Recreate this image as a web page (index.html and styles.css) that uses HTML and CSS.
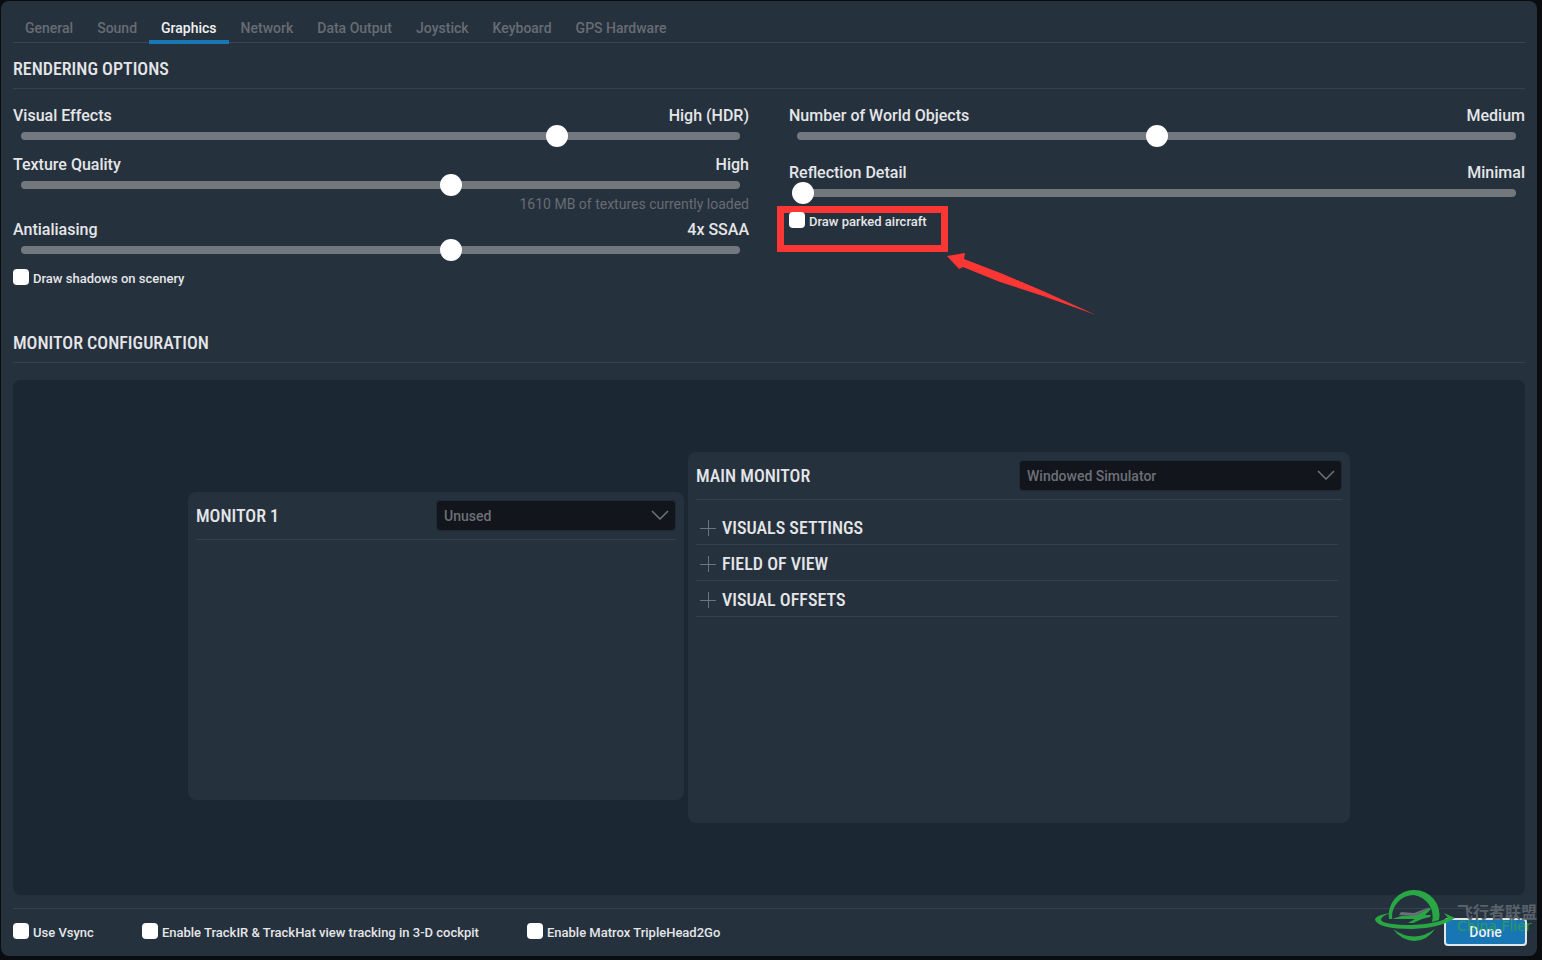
FILE: index.html
```html
<!DOCTYPE html>
<html lang="en">
    <head>
        <meta charset="UTF-8" />
        <meta name="viewport" content="width=device-width, initial-scale=1.0" />
        <title>Settings - Graphics</title>
        <link rel="stylesheet" href="styles.css">
    </head>
    <body>
        <div class="window">
            <nav class="tabs">
                <a href="#general">General</a>
                <a href="#sound">Sound</a>
                <a href="#graphics" class="active">Graphics</a>
                <a href="#network">Network</a>
                <a href="#data">Data Output</a>
                <a href="#joystick">Joystick</a>
                <a href="#keyboard">Keyboard</a>
                <a href="#gps">GPS Hardware</a>
            </nav>

            <h2 class="title">RENDERING OPTIONS</h2>
            <div class="options">
                <div class="column">
                    <div class="setting">
                        <div class="caption"><label for="effects">Visual Effects</label><output for="effects">High (HDR)</output></div>
                        <div class="track"><input id="effects" type="range" value="75" /></div>
                    </div>
                    <div class="setting noted">
                        <div class="caption"><label for="texture">Texture Quality</label><output for="texture">High</output></div>
                        <div class="track"><input id="texture" type="range" value="60" /></div>
                        <p class="note">1610 MB of textures currently loaded</p>
                    </div>
                    <div class="setting">
                        <div class="caption"><label for="aa">Antialiasing</label><output for="aa">4x SSAA</output></div>
                        <div class="track"><input id="aa" type="range" value="60" /></div>
                    </div>
                    <label class="check"><input type="checkbox" /><span>Draw shadows on scenery</span></label>
                </div>
                <div class="column">
                    <div class="setting spaced">
                        <div class="caption"><label for="objects">Number of World Objects</label><output for="objects">Medium</output></div>
                        <div class="track"><input id="objects" type="range" value="50" /></div>
                    </div>
                    <div class="setting">
                        <div class="caption"><label for="reflection">Reflection Detail</label><output for="reflection">Minimal</output></div>
                        <div class="track"><input id="reflection" type="range" value="0" /></div>
                    </div>
                    <div class="marked">
                        <label class="check"><input type="checkbox" /><span>Draw parked aircraft</span></label>
                        <div class="mark"></div>
                        <svg class="arrow" width="150" height="64" viewBox="0 0 150 64">
                            <path d="M0 4 18 1 17 7 56 22 96 39 149 63 96 44 53 30 16 15 12 17Z" fill="#fb3736" />
                        </svg>
                    </div>
                </div>
            </div>

            <h2 class="title">MONITOR CONFIGURATION</h2>
            <div class="canvas">
                <section class="monitor side">
                    <header>
                        <h3>MONITOR 1</h3>
                        <div class="picker">
                            <select aria-label="Monitor 1 usage"><option>Unused</option></select>
                            <svg width="18" height="10" viewBox="0 0 18 10"><path d="M1 1 9 9 17 1" /></svg>
                        </div>
                    </header>
                </section>
                <section class="monitor main">
                    <header>
                        <h3>MAIN MONITOR</h3>
                        <div class="picker">
                            <select aria-label="Main monitor usage"><option>Windowed Simulator</option></select>
                            <svg width="18" height="10" viewBox="0 0 18 10"><path d="M1 1 9 9 17 1" /></svg>
                        </div>
                    </header>
                    <div class="groups">
                        <button type="button"><svg width="16" height="16" viewBox="0 0 16 16"><path d="M0 8.5H16M8.5 0V16" /></svg>VISUALS SETTINGS</button>
                        <button type="button"><svg width="16" height="16" viewBox="0 0 16 16"><path d="M0 8.5H16M8.5 0V16" /></svg>FIELD OF VIEW</button>
                        <button type="button"><svg width="16" height="16" viewBox="0 0 16 16"><path d="M0 8.5H16M8.5 0V16" /></svg>VISUAL OFFSETS</button>
                    </div>
                </section>
            </div>

            <footer class="footer">
                <label class="check"><input type="checkbox" /><span>Use Vsync</span></label>
                <label class="check"><input type="checkbox" /><span>Enable TrackIR &amp; TrackHat view tracking in 3-D cockpit</span></label>
                <label class="check"><input type="checkbox" /><span>Enable Matrox TripleHead2Go</span></label>
                <button type="button" class="done">Done</button>
            </footer>
        </div>

        <div class="watermark">
            <svg width="80" height="54" viewBox="0 0 80 54">
                <g fill="#29a745">
                    <path d="M14 31 A25 25 0 0 1 39 2 A25 25 0 0 1 64 32 L57 34 A22 22 0 0 0 39 7 A22 22 0 0 0 17 31Z" />
                    <path d="M18 41 Q39 56 60 41 Q52 53 39 53 Q26 52 18 41Z" />
                    <path d="M16 25 Q0 27 0 32 Q4 41 37 41 Q66 40 80 30 L69 25 73 30 Q60 36 37 37 Q9 37 6 32 Q6 28 16 25Z" />
                    <path d="M17 31 26 28 42 27 54 20 56 21 50 27 56 27 55 29 47 31 38 35 33 35 40 31Z" />
                </g>
                <path d="M24 27 26 24 39 25 55 19 51 22 40 28Z" fill="#687078" />
            </svg>
            <div class="brand">
                <span class="cn" lang="zh-CN">飞行者联盟</span>
                <span class="en">China Flier</span>
            </div>
        </div>
    </body>
</html>
```

FILE: styles.css
```css
* {
    box-sizing: border-box;
    padding: 0;
    margin: 0;
}

html,
body {
    height: 100%;
}

body {
    display: flex;
    padding: 1px 5px 4px 1px;
    background-color: #0a0c10;
    color: #e4e6e8;
    font-family: Roboto, "Liberation Sans", sans-serif;
    font-size: 16px;
    font-weight: 500;
}

button,
input,
select {
    font: inherit;
    color: inherit;
}

.window {
    flex: 1;
    display: flex;
    flex-direction: column;
    padding: 0 12px;
    border-radius: 8px;
    background-color: #26313e;
}

.tabs {
    display: flex;
    height: 42px;
    border-bottom: 1px solid #3a4652;
}

.tabs a {
    height: 43px;
    padding: 17px 12px 0;
    color: #676c73;
    font-size: 14px;
    line-height: 20px;
    text-decoration: none;
}

.tabs .active {
    border-bottom: 4px solid #1878b5;
    color: #f0f1f2;
}

.title,
.monitor h3,
.groups button {
    font-family: "Roboto Condensed", Roboto, "Liberation Sans", sans-serif;
    font-size: 18px;
    font-weight: 500;
    line-height: 20px;
}

.title {
    padding: 16px 0 9px;
    border-bottom: 1px solid #35414e;
}

.options {
    display: flex;
    gap: 40px;
    padding: 17px 0 30px;
}

.column {
    flex: 1;
}

.setting {
    margin-bottom: 15px;
}

.spaced {
    margin-bottom: 23px;
}

.noted {
    margin-bottom: 8px;
}

.caption {
    display: flex;
    justify-content: space-between;
    line-height: 20px;
    margin-bottom: 6px;
}

.track {
    height: 8px;
    margin: 0 9px 0 8px;
    border-radius: 4px;
    background-color: #73777e;
}

/* the knob runs a little past both ends of the bar */
.track input {
    display: block;
    position: relative;
    top: -7px;
    width: calc(100% + 10px);
    height: 22px;
    margin: 0 -5px;
    appearance: none;
    background: none;
}

.track input::-webkit-slider-thumb {
    appearance: none;
    width: 22px;
    height: 22px;
    border-radius: 50%;
    background-color: #fff;
}

.note {
    margin-top: 7px;
    color: #676c73;
    font-size: 14px;
    font-weight: 400;
    line-height: 16px;
    text-align: right;
}

.check {
    display: flex;
    align-items: flex-start;
    gap: 4px;
    height: 18px;
    font-size: 13px;
    line-height: 16px;
}

.check span {
    padding-top: 2px;
}

.check input {
    appearance: none;
    width: 16px;
    height: 16px;
    border-radius: 4px;
    background-color: #fff;
}

.marked {
    position: relative;
}

.mark {
    position: absolute;
    left: -12px;
    top: -6px;
    width: 171px;
    height: 46px;
    border: 7px solid #fb3736;
    pointer-events: none;
}

.marked .check {
    position: relative;
    z-index: 1;
}

.arrow {
    position: absolute;
    left: 158px;
    top: 40px;
}

.canvas {
    flex: 1;
    display: flex;
    justify-content: center;
    align-items: center;
    gap: 4px;
    margin: 17px 0 13px;
    border-radius: 8px;
    background-color: #1b2733;
}

.monitor {
    padding: 8px;
    border-radius: 8px;
    background-color: #26313e;
}

.side {
    width: 496px;
    min-height: 308px;
    margin-top: 17px;
}

.main {
    width: 662px;
    min-height: 371px;
}

.monitor header {
    display: flex;
    justify-content: space-between;
    align-items: center;
    padding-bottom: 8px;
    border-bottom: 1px solid #35414e;
}

.picker {
    position: relative;
    width: 50%;
}

.picker select {
    display: block;
    width: 100%;
    height: 31px;
    padding: 0 7px;
    appearance: none;
    border: 1px solid #202a35;
    border-radius: 4px;
    background-color: #12151c;
    color: #6c7077;
    font-size: 14px;
}

.picker svg {
    position: absolute;
    right: 7px;
    top: 10px;
    pointer-events: none;
}

.monitor path {
    fill: none;
    stroke: #6c747c;
}

.picker path {
    stroke-width: 1.5;
}

.groups {
    padding: 9px 4px 0 0;
}

.groups button {
    display: flex;
    align-items: center;
    gap: 6px;
    width: 100%;
    height: 36px;
    padding: 2px 0 0 4px;
    border: none;
    border-bottom: 1px solid #35414e;
    background: none;
}

.footer {
    display: flex;
    align-items: center;
    gap: 48px;
    height: 48px;
    margin-right: -2px;
    padding-bottom: 2px;
    border-top: 1px solid #35414e;
}

.done {
    width: 83px;
    height: 28px;
    margin-left: auto;
    border: 2px solid #dfe6ec;
    border-radius: 4px;
    background-color: #1976b5;
    color: #f0f1f2;
    font-size: 14px;
}

.watermark {
    position: absolute;
    right: 5px;
    bottom: 18px;
    display: flex;
    gap: 2px;
    pointer-events: none;
}

.brand {
    display: flex;
    flex-direction: column;
    padding-top: 16px;
    white-space: nowrap;
}

.cn {
    color: #59626b;
    font-family: "Noto Sans CJK SC", sans-serif;
    font-size: 16px;
    font-weight: 700;
    line-height: 15px;
}

.en {
    color: #29a745;
    font-family: "DejaVu Sans", sans-serif;
    font-size: 14px;
    line-height: 14px;
    opacity: 0.8;
}
```
